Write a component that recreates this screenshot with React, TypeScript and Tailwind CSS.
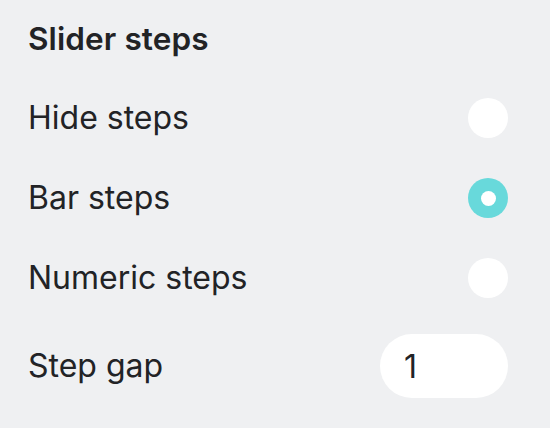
import React, { useState } from 'react';

type StepMode = 'hide' | 'bar' | 'numeric';

const options: { id: StepMode; label: string }[] = [
    { id: 'hide', label: 'Hide steps' },
    { id: 'bar', label: 'Bar steps' },
    { id: 'numeric', label: 'Numeric steps' },
];

function Radio({ checked, onClick }: { checked: boolean; onClick: () => void }) {
    return (
        <button
            onClick={onClick}
            className={`w-10 h-10 rounded-full flex items-center justify-center ${checked ? 'bg-[#68d9db]' : 'bg-white'}`}
        >
            {checked && <span className="w-[15px] h-[15px] rounded-full bg-white" />}
        </button>
    );
}

export default function App() {
    const [mode, setMode] = useState<StepMode>('bar');
    const [gap, setGap] = useState('1');

    return (
        <div
            className="w-[550px] h-[428px] bg-[#eff0f2] text-[#222326] pl-[28px] pr-[42px]"
            style={{ fontFamily: 'Inter, "Noto Sans", sans-serif' }}
        >
            <div className="h-[78px] flex items-center">
                <h2 className="text-[31.5px] font-semibold tracking-[0.1px]">Slider steps</h2>
            </div>

            {options.map((opt) => (
                <div key={opt.id} className="h-[80px] flex items-center justify-between">
                    <span className="text-[32px]">{opt.label}</span>
                    <Radio checked={mode === opt.id} onClick={() => setMode(opt.id)} />
                </div>
            ))}

            <div className="h-[96px] flex items-center justify-between">
                <span className="text-[32px]">Step gap</span>
                <input
                    value={gap}
                    onChange={(e) => setGap(e.target.value)}
                    className="w-[128px] h-[64px] rounded-full bg-white px-6 text-[32px] outline-none"
                />
            </div>
        </div>
    );
}
